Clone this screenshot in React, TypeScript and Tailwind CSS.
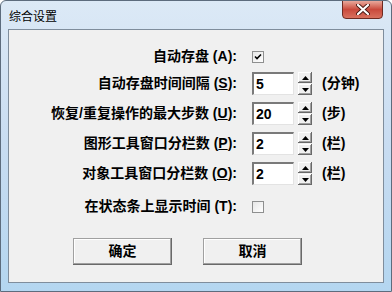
import React from "react";

const FONT = { fontFamily: '"Liberation Sans", "Noto Sans CJK SC", sans-serif' };

function CheckBox({ checked }: { checked?: boolean }) {
  return (
    <div className="w-[12px] h-[12px] border border-[#8e8f8f] bg-gradient-to-br from-[#e6e6e6] to-white flex items-center justify-center">
      {checked && (
        <svg width="8" height="8" viewBox="0 0 8 8">
          <path d="M1 3.5 L3 5.5 L7 1.5" stroke="#000" strokeWidth="1.6" fill="none" />
        </svg>
      )}
    </div>
  );
}

function SpinBtn({ up }: { up?: boolean }) {
  return (
    <div className="h-[11px] w-[14px] bg-[#f0f0f0] flex items-center justify-center shadow-[inset_-1px_-1px_0_#696969,inset_1px_1px_0_#fff,inset_-2px_-2px_0_#a0a0a0]">
      <svg width="7" height="4" viewBox="0 0 7 4">
        {up ? <path d="M0 4 L3.5 0 L7 4 Z" fill="#000" /> : <path d="M0 0 L7 0 L3.5 4 Z" fill="#000" />}
      </svg>
    </div>
  );
}

function Spinner({ value, unit }: { value: string; unit: string }) {
  return (
    <div className="flex items-center">
      <div className="w-[42px] h-[23px] bg-white border-t-2 border-l-2 border-b border-r border-t-[#7a7a7a] border-l-[#7a7a7a] border-b-[#e3e3e3] border-r-[#e3e3e3] flex items-center pl-[2px] text-[14px] font-bold text-black">
        {value}
      </div>
      <div className="ml-[4px] flex flex-col h-[23px] justify-between">
        <SpinBtn up />
        <SpinBtn />
      </div>
      <div className="ml-[10px] text-[14px] font-bold text-black">{unit}</div>
    </div>
  );
}

function Row({ label, acc, under, children, className }: { label: string; acc: string; under?: boolean; children: React.ReactNode; className?: string }) {
  return (
    <div className={"flex items-center h-[23px] " + (className || "")}>
      <div className="w-[228px] text-right text-[14px] font-bold text-black whitespace-nowrap">
        {label} ({under ? <span className="underline">{acc}</span> : acc}):
      </div>
      <div className="ml-[15px]">{children}</div>
    </div>
  );
}

function Button({ children }: { children: React.ReactNode }) {
  return (
    <div className="w-[99px] h-[27px] bg-[#f0f0f0] flex items-center justify-center text-[14px] font-bold text-black shadow-[inset_-1px_-1px_0_#696969,inset_1px_1px_0_#a0a0a0,inset_-2px_-2px_0_#a0a0a0,inset_2px_2px_0_#fff]">
      {children}
    </div>
  );
}

export default function App() {
  return (
    <div style={FONT} className="w-[392px] h-[292px] flex flex-col border border-[#5d6c7d] rounded-t-[6px] bg-gradient-to-b from-[#dce9f6] via-[#c8dcf1] to-[#b4d6f0] overflow-hidden">
      <div className="h-[28px] flex justify-between items-start">
        <div className="ml-[8px] mt-[7px] text-[12px] text-black">综合设置</div>
        <div className="mr-[8px] -mt-px w-[41px] h-[19px] rounded-b-[4px] border border-[#6e2b22] bg-gradient-to-b from-[#e8a89c] via-[#c9493c] to-[#d8705e] flex items-center justify-center">
          <svg width="14" height="11" viewBox="0 0 14 11">
            <path d="M2 1 L12 10 M12 1 L2 10" stroke="#4a1a14" strokeWidth="4" strokeLinecap="round" />
            <path d="M2 1 L12 10 M12 1 L2 10" stroke="#fff" strokeWidth="2.2" strokeLinecap="round" />
          </svg>
        </div>
      </div>
      <div className="mx-[7px] mb-[8px] flex-1 border border-[#7f8d9c] bg-[#f0f0f0] flex flex-col pt-[15px]">
        <Row label="自动存盘" acc="A">
          <CheckBox checked />
        </Row>
        <Row label="自动存盘时间间隔" acc="S" under className="mt-[4px]">
          <Spinner value="5" unit="(分钟)" />
        </Row>
        <Row label="恢复/重复操作的最大步数" acc="U" under className="mt-[7px]">
          <Spinner value="20" unit="(步)" />
        </Row>
        <Row label="图形工具窗口分栏数" acc="P" under className="mt-[7px]">
          <Spinner value="2" unit="(栏)" />
        </Row>
        <Row label="对象工具窗口分栏数" acc="O" under className="mt-[7px]">
          <Spinner value="2" unit="(栏)" />
        </Row>
        <Row label="在状态条上显示时间" acc="T" className="mt-[10px]">
          <CheckBox />
        </Row>
        <div className="flex mt-[20px] ml-[64px] gap-[31px]">
          <Button>确定</Button>
          <Button>取消</Button>
        </div>
      </div>
    </div>
  );
}
